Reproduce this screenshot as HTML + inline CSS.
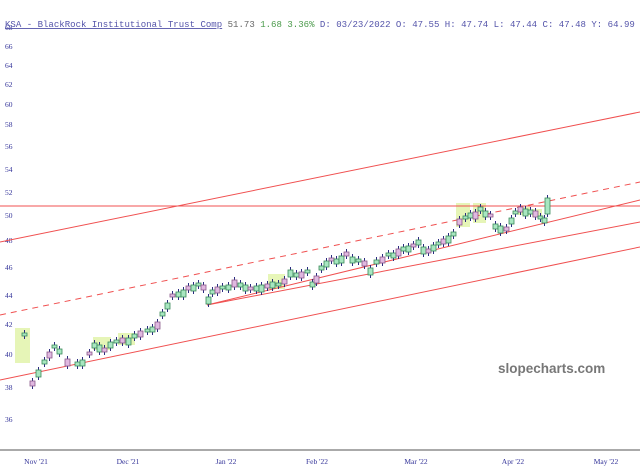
<!DOCTYPE html>
<html><head><meta charset="utf-8"><style>
html,body{margin:0;padding:0;background:#fff;width:640px;height:474px;overflow:hidden}
svg{display:block}
</style></head><body>
<svg id="s" width="640" height="474" xmlns="http://www.w3.org/2000/svg">
<g fill="#333399" font-family="Liberation Serif, serif" font-size="7.5">
<text x="5" y="30">68</text><text x="5" y="49">66</text><text x="5" y="68">64</text><text x="5" y="87">62</text><text x="5" y="107">60</text><text x="5" y="127">58</text><text x="5" y="149">56</text><text x="5" y="172">54</text><text x="5" y="195">52</text><text x="5" y="218">50</text><text x="5" y="243">48</text><text x="5" y="270">46</text><text x="5" y="298">44</text><text x="5" y="327">42</text><text x="5" y="357">40</text><text x="5" y="390">38</text><text x="5" y="422">36</text>
</g>
<g fill="#e4f5b0" opacity="0.9">
<rect x="15" y="328" width="15" height="35"/><rect x="93" y="337" width="18" height="13"/><rect x="118" y="333" width="17" height="12"/><rect x="268" y="274" width="17" height="15"/><rect x="456" y="203" width="14" height="24"/><rect x="473" y="203" width="13" height="20"/><rect x="518" y="207" width="12" height="8"/><rect x="532" y="209" width="10" height="8"/>
</g>
<g stroke="#f05050" stroke-width="1" fill="none">
<line x1="0" y1="242" x2="640" y2="112"/>
<line x1="0" y1="315" x2="640" y2="182" stroke-dasharray="6,5"/>
<line x1="0" y1="206" x2="640" y2="206"/>
<line x1="207" y1="305" x2="640" y2="200"/>
<line x1="207" y1="305" x2="640" y2="222"/>
<line x1="0" y1="380" x2="640" y2="247"/>
</g>
<g id="c"></g>
<line x1="0" y1="450" x2="640" y2="450" stroke="#aaa" stroke-width="2"/>
<g fill="#333399" font-family="Liberation Serif, serif" font-size="7.5" text-anchor="middle">
<text x="36" y="464">Nov '21</text><text x="128" y="464">Dec '21</text><text x="226" y="464">Jan '22</text><text x="317" y="464">Feb '22</text><text x="416" y="464">Mar '22</text><text x="513" y="464">Apr '22</text><text x="606" y="464">May '22</text>
</g>
<text x="498" y="373" font-family="Liberation Sans, sans-serif" font-weight="bold" font-size="13.5" fill="#777">slopecharts.com</text>
<text x="5" y="27" font-family="Liberation Mono, monospace" font-size="9.05" fill="#5555aa"><tspan text-decoration="underline">KSA - BlackRock Institutional Trust Comp</tspan> <tspan fill="#666">51.73</tspan> <tspan fill="#4a9a4a">1.68 3.36%</tspan> D: 03/23/2022 O: 47.55 H: 47.74 L: 47.44 C: 47.48 Y: 64.99</text>
</svg>
<script>
var p=[[22,333],[30,381],[36,370],[42,360],[47,352],[52,345],[57,349],[65,359],[75,362],[80,360],[87,352],[92,343],[97,345],[102,348],[108,342],[114,340],[120,338],[126,338],[132,334],[138,331],[145,329],[150,327],[155,322],[160,312],[165,303],[170,294],[176,292],[181,290],[186,286],[191,285],[196,283],[201,285],[206,297],[210,290],[215,287],[220,286],[226,285],[232,280],[238,283],[243,285],[248,287],[254,286],[259,285],[265,284],[270,282],[276,283],[282,279],[288,270],[294,273],[299,272],[305,270],[310,282],[314,276],[319,266],[324,261],[329,258],[334,259],[339,256],[344,252],[350,257],[356,259],[362,261],[368,268],[374,260],[380,257],[386,253],[391,253],[396,249],[401,247],[406,246],[411,244],[416,240],[421,247],[426,249],[431,245],[436,242],[441,239],[446,236],[451,232],[457,219],[463,216],[468,213],[473,212],[478,207],[483,211],[488,214],[493,224],[498,226],[504,227],[509,218],[513,211],[518,207],[523,209],[528,210],[533,211],[538,216],[542,218],[545,198]];
var g=document.getElementById('c'),h='';
for(var i=0;i<p.length;i++){var x=p[i][0],y=p[i][1],up=(i%3!=1)||i==p.length-1;
var bh=3+(i*7%5);if(i==p.length-1)bh=16;
var f=up?'#a8e6c0':'#e0b8e0',s=up?'#3a8a5a':'#8a5a8a';
h+='<line x1="'+(x+2.5)+'" y1="'+(y-3)+'" x2="'+(x+2.5)+'" y2="'+(y+bh+3)+'" stroke="#2a2a80" stroke-width="1"/>';
h+='<rect x="'+x+'" y="'+y+'" width="5" height="'+bh+'" fill="'+f+'" stroke="'+s+'" stroke-width="0.8"/>';}
g.innerHTML=h;
</script>
</body></html>
